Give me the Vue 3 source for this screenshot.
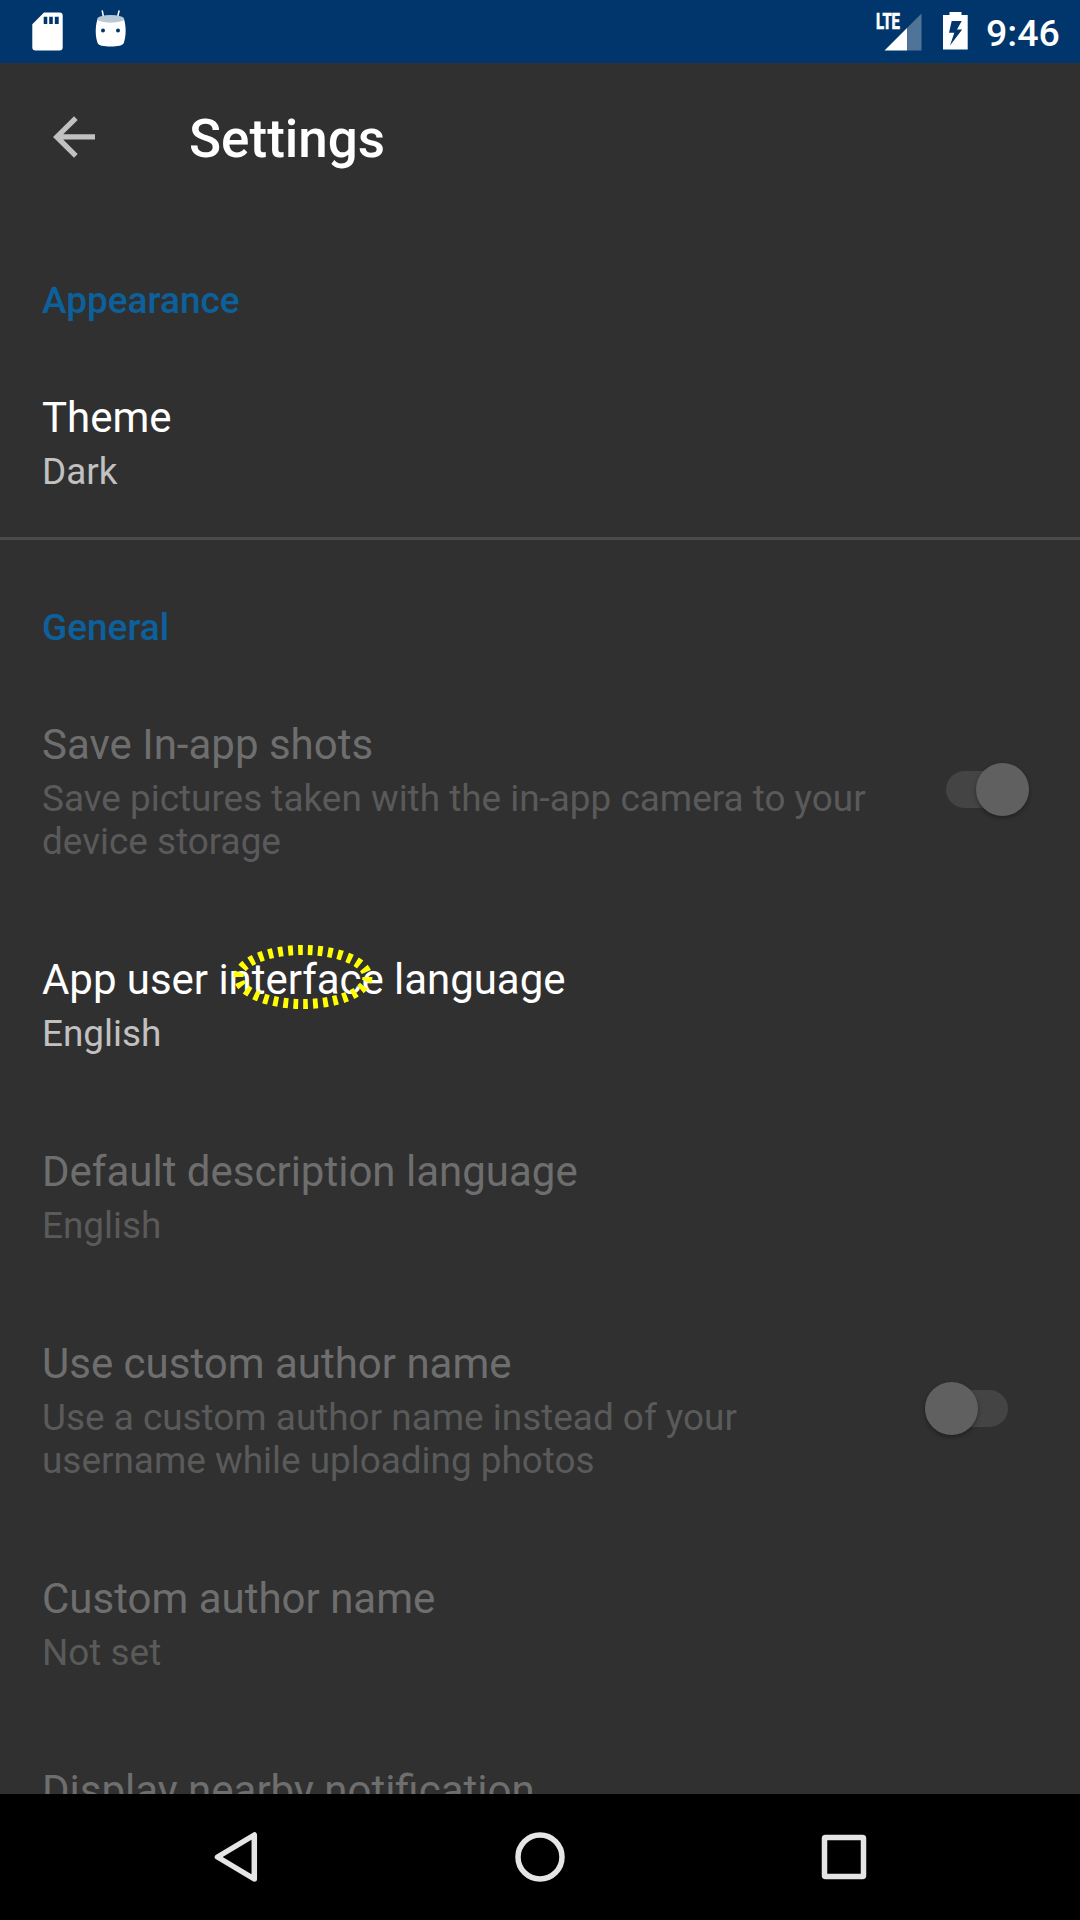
<script setup>
const sections = [
  {
    name: 'Appearance',
    rows: [{ title: 'Theme', summary: 'Dark', enabled: true }],
  },
  {
    name: 'General',
    rows: [
      {
        title: 'Save In-app shots',
        summary: 'Save pictures taken with the in-app camera to your device storage',
        toggle: 'on',
      },
      { title: 'App user interface language', summary: 'English', enabled: true, marked: true },
      { title: 'Default description language', summary: 'English' },
      {
        title: 'Use custom author name',
        summary: 'Use a custom author name instead of your username while uploading photos',
        toggle: 'off',
      },
      { title: 'Custom author name', summary: 'Not set' },
      { title: 'Display nearby notification', summary: '' },
    ],
  },
]
</script>

<template>
  <div class="screen">
    <header class="status">
      <svg class="sd" width="32" height="40" viewBox="0 0 32 40">
        <path fill="#fff" fill-rule="evenodd" d="M12 .6H27.500a3.200 3.200 0 0 1 3.200 3.200V35.300a3.200 3.200 0 0 1-3.200 3.200H3.500a3.200 3.200 0 0 1-3.200-3.200V12.300zM11.700 4.700v7.300h3.600V4.700zM17.200 4.700v7.300h3.600V4.700zM22.800 4.700v7.300h3.900V4.700z" />
      </svg>
      <svg class="droid" width="32" height="38" viewBox="0 0 32 38">
        <path stroke="#fff" stroke-width="1.500" stroke-linecap="round" d="M7.300 1 8.600 7.500M24 1 22.500 7.500" />
        <path fill="#fff" d="M2.300 9.500C.2 17 .2 26 2.600 33 3 35.500 9 36.500 15.700 36.500S28.200 35.500 28.800 33C31.200 26 31.200 17 29.200 9.500z" />
        <ellipse cx="15.700" cy="8.900" rx="13.500" ry="3.800" fill="#b9c8d7" />
        <circle cx="8" cy="20.600" r="2" fill="#00366b" />
        <circle cx="23" cy="20.600" r="2" fill="#00366b" />
      </svg>
      <div class="spacer"></div>
      <svg class="signal" width="46" height="40" viewBox="0 0 46 40">
        <path fill="#fff" fill-opacity=".31" d="M45.500 1.500V38.500H31V16z" />
        <path fill="#fff" d="M8.500 38.500 31 16V38.500z" />
        <text x="0" y="17" textLength="24" lengthAdjust="spacingAndGlyphs">LTE</text>
      </svg>
      <svg class="battery" width="25" height="38" viewBox="0 0 25 38">
        <path fill="#fff" fill-rule="evenodd" d="M6.500 0H18.500V3H24.700V37.600H0V3H6.500zM8.700 9 6 20.800H11.300L7 33.500 19.200 17.400H14L18.700 9z" />
      </svg>
      <span class="clock">9:46</span>
    </header>

    <div class="toolbar">
      <svg class="back" width="42" height="42" viewBox="0 0 42 42">
        <path fill="#c1c1c1" d="M42 18.300V23.500H10.200L24.700 38 21 41.700 0 21 21 .2 24.700 3.900 10.200 18.300z" />
      </svg>
      <h1>Settings</h1>
    </div>

    <main class="list">
      <section v-for="s in sections" :key="s.name">
        <h2>{{ s.name }}</h2>
        <div
          v-for="r in s.rows"
          :key="r.title"
          class="row"
          :class="{ enabled: r.enabled, marked: r.marked }"
        >
          <div class="text">
            <div class="title">{{ r.title }}</div>
            <div class="summary">{{ r.summary }}</div>
          </div>
          <div v-if="r.toggle" class="switch" :class="r.toggle">
            <span class="track"></span>
            <span class="thumb"></span>
          </div>
          <svg v-if="r.marked" class="mark" width="144" height="68" viewBox="0 0 144 68">
            <ellipse cx="72" cy="34" rx="64.500" ry="27" fill="none" stroke="#ff0" stroke-width="10" stroke-dasharray="4.800 5.200" pathLength="300" />
          </svg>
        </div>
      </section>
    </main>

    <nav class="navbar">
      <svg width="50" height="54" viewBox="0 0 50 54">
        <path d="M43.300 5V49L6.500 27z" stroke-linejoin="round" />
      </svg>
      <svg width="54" height="54" viewBox="0 0 54 54">
        <circle cx="28" cy="27" r="22" />
      </svg>
      <svg width="54" height="54" viewBox="0 0 54 54">
        <rect x="7.500" y="7.500" width="39" height="39" rx="1" />
      </svg>
    </nav>
  </div>
</template>

<style>
body {
  margin: 0;
  background: #303030;
}
</style>

<style scoped>
.screen {
  width: 1080px;
  height: 1920px;
  display: flex;
  flex-direction: column;
  overflow: hidden;
  background: #303030;
  font-family: Roboto, "Liberation Sans", sans-serif;
}
.status {
  flex: none;
  box-sizing: border-box;
  height: 63px;
  padding: 12px 22px 0 32px;
  display: flex;
  align-items: flex-start;
  background: #00366b;
}
.droid {
  margin: -2px 0 0 31px;
}
.spacer {
  flex: 1;
}
.signal {
  margin-right: 21px;
  overflow: visible;
}
.signal text {
  font: 700 21.5px Roboto, sans-serif;
  fill: #fff;
  stroke: #fff;
  stroke-width: .7px;
}
.battery {
  margin-right: 18.500px;
}
.clock {
  width: 72px;
  font-size: 37.500px;
  font-weight: 500;
  line-height: 44px;
  margin-top: -1px;
  color: #fff;
  white-space: nowrap;
}
.toolbar {
  flex: none;
  box-sizing: border-box;
  height: 147px;
  padding-left: 52.500px;
  display: flex;
  align-items: center;
}
.back {
  margin-right: 94.500px;
}
h1 {
  margin: 5px 0 0;
  font-size: 53px;
  font-weight: 500;
  line-height: 62px;
  color: #fff;
}
.list {
  flex: 1;
  min-height: 0;
  overflow: hidden;
  padding-top: 3px;
}
section + section {
  border-top: 3px solid #4a4a4a;
  margin-top: -2px;
}
h2 {
  box-sizing: border-box;
  height: 134px;
  margin: 0;
  padding: 66px 42px 0;
  font-size: 37px;
  font-weight: 500;
  line-height: 43px;
  color: #0c609c;
}
.row {
  position: relative;
  display: flex;
  align-items: center;
  justify-content: space-between;
  padding: 46px 0 46px 42px;
  color: #6e6e6e;
}
.text {
  width: 840px;
}
.title {
  font-size: 42px;
  line-height: 49px;
}
.marked .title {
  letter-spacing: -.04px;
}
.summary {
  margin-top: 8px;
  min-height: 43px;
  font-size: 36.900px;
  line-height: 43px;
  color: #5a5a5a;
}
.enabled .title {
  color: #fff;
}
.enabled .summary {
  color: #c1c1c1;
}
.switch {
  flex: none;
  width: 83px;
  height: 53px;
  margin-bottom: 4px;
  display: flex;
  align-items: center;
}
.switch.on {
  margin-right: 51px;
}
.switch.off {
  margin-right: 72px;
}
.track {
  flex: none;
  width: 83px;
  height: 37px;
  border-radius: 19px;
  background: #444;
}
.thumb {
  flex: none;
  width: 53px;
  height: 53px;
  border-radius: 50%;
  background: #606060;
  box-shadow: 0 2px 4px rgba(0, 0, 0, .35);
}
.on .thumb {
  margin-left: -53px;
}
.off .thumb {
  margin-left: -83px;
}
.mark {
  position: absolute;
  left: 231px;
  top: 34px;
}
.navbar {
  flex: none;
  height: 126px;
  display: flex;
  align-items: center;
  justify-content: space-between;
  padding: 0 209px 0 211px;
  background: #000;
}
.navbar svg {
  fill: none;
  stroke: #e5e5e5;
  stroke-width: 5.500px;
}
</style>
